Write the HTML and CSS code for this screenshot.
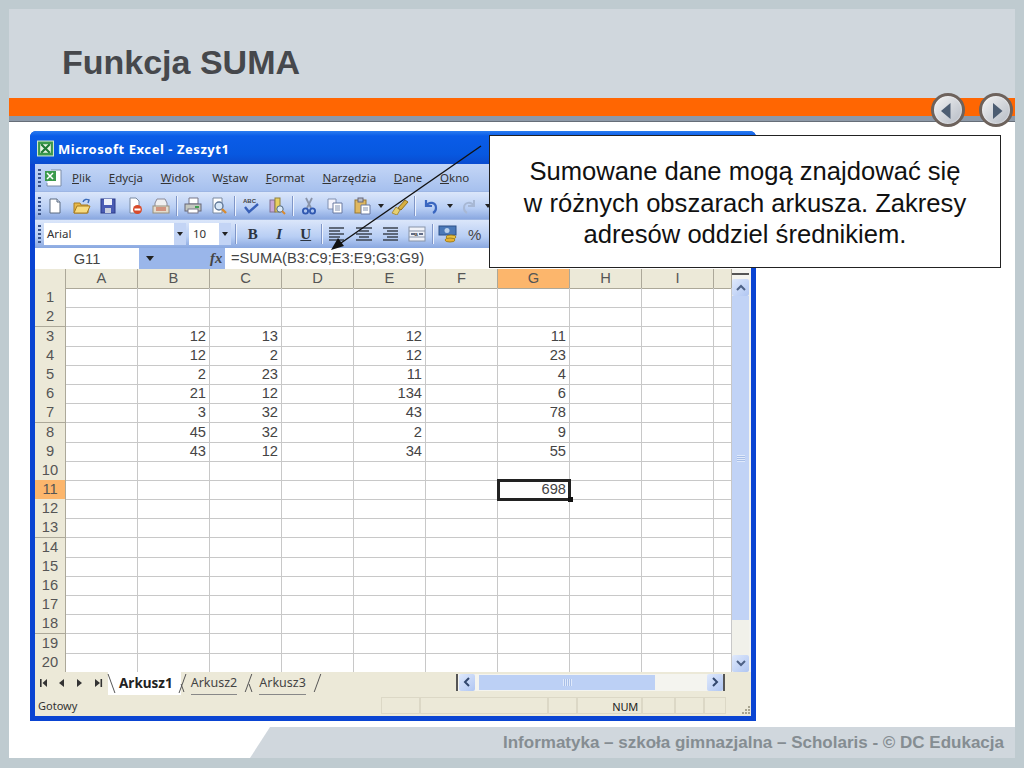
FILE: index.html
```html
<!DOCTYPE html>
<html lang="pl">
<head>
    <meta charset="UTF-8">
    <meta name="viewport" content="width=device-width, initial-scale=1.0">
    <title>Funkcja SUMA</title>
    <link rel="stylesheet" href="styles.css">
</head>
<body>
<div class="slide">

    <header class="slide-head">
        <h1>Funkcja SUMA</h1>
    </header>
    <div class="orange-bar"></div>
    <div class="grey-bar"></div>

    <!-- Previous / next buttons -->
    <div class="nav-buttons">
        <div class="nav-btn"><svg viewBox="0 0 34 34" width="34" height="34"><path d="M19.500 10v16L10 18z" fill="#4d5d72"/></svg></div>
        <div class="nav-btn"><svg viewBox="0 0 34 34" width="34" height="34"><path d="M14 10v16l9.500-8z" fill="#4d5d72"/></svg></div>
    </div>

    <main class="slide-main">
        <div class="excel">

            <div class="title-bar">
                <svg class="xl-logo" viewBox="0 0 16 16" width="17" height="17"><rect x="0.5" y="1" width="15" height="14" fill="#3c9a4c" stroke="#cfe8c8"/><rect x="3" y="4" width="10" height="8" fill="#e8f4e4"/><path d="M4 4l8 8M12 4l-8 8" stroke="#1f7a35" stroke-width="2"/></svg>
                <span>Microsoft Excel - Zeszyt1</span>
            </div>

            <div class="menu-bar">
                <span class="grip"></span>
                <svg class="menu-icon" viewBox="0 0 18 18" width="18" height="18"><path d="M7 1h10v16H3v-3" fill="#fff" stroke="#7b8ca8"/><rect x="1" y="2" width="11" height="10" fill="#3c9a4c"/><path d="M3 4l6 6M9 4l-6 6" stroke="#fff" stroke-width="1.5"/></svg>
                <nav class="menu-items">
                    <a><u>P</u>lik</a>
                    <a><u>E</u>dycja</a>
                    <a><u>W</u>idok</a>
                    <a>W<u>s</u>taw</a>
                    <a><u>F</u>ormat</a>
                    <a><u>N</u>arzędzia</a>
                    <a><u>D</u>ane</a>
                    <a><u>O</u>kno</a>
                </nav>
            </div>

            <div class="toolbar toolbar-std">
                <span class="grip"></span>
                <span class="tb"><svg viewBox="0 0 18 18" width="18" height="18"><path d="M4 2h7l3 3v11H4z" fill="#fff" stroke="#5a6a80"/><path d="M11 2v3h3" fill="#dfe6f2" stroke="#5a6a80"/></svg></span>
                <span class="tb"><svg viewBox="0 0 18 18" width="18" height="18"><path d="M1 6h6l1 2h7v8H1z" fill="#e8b848" stroke="#a87c20"/><path d="M1 16l3-7h13l-3 7z" fill="#f8dc80" stroke="#a87c20"/><path d="M10 5c1-3 4-3 6-2l-1 3" fill="none" stroke="#3a6ab8" stroke-width="1.4"/></svg></span>
                <span class="tb"><svg viewBox="0 0 18 18" width="18" height="18"><rect x="2" y="2" width="14" height="14" fill="#4a5cb4" stroke="#2c3a88"/><rect x="5" y="2" width="8" height="6" fill="#eef1fa"/><rect x="6" y="11" width="6" height="5" fill="#c8cede"/></svg></span>
                <span class="tb"><svg viewBox="0 0 18 18" width="18" height="18"><path d="M4 1h6l3 3v12H4z" fill="#fff" stroke="#7a8aa0"/><circle cx="11.5" cy="12.5" r="4.5" fill="#d84a2a"/><rect x="8.5" y="11.5" width="6" height="2" fill="#fff"/></svg></span>
                <span class="tb"><svg viewBox="0 0 18 18" width="18" height="18"><path d="M5 2h8l2 4v4H3V6z" fill="#f0f0f0" stroke="#8a8a98"/><rect x="1" y="9" width="16" height="7" fill="#e4dccc" stroke="#98907c"/><path d="M4 11h10M4 13h10" stroke="#c04a30"/></svg></span>
                <span class="tb-sep"></span>
                <span class="tb"><svg viewBox="0 0 18 18" width="18" height="18"><path d="M5 1h9v6H5z" fill="#fff" stroke="#778"/><rect x="1" y="7" width="16" height="7" fill="#c4c8c0" stroke="#667"/><rect x="4" y="12" width="10" height="4" fill="#fff" stroke="#778"/><rect x="11" y="9" width="4" height="2" fill="#40a050"/></svg></span>
                <span class="tb"><svg viewBox="0 0 18 18" width="18" height="18"><path d="M3 1h9v15H3z" fill="#fff" stroke="#7a8aa0"/><circle cx="9" cy="9" r="4" fill="#d8e8f8" stroke="#607898" stroke-width="1.4"/><path d="M12 12l4 4" stroke="#d88a30" stroke-width="2.4"/></svg></span>
                <span class="tb-sep"></span>
                <span class="tb"><svg viewBox="0 0 18 18" width="18" height="18"><text x="1" y="6" class="abc">ABC</text><path d="M3 10l4 5 9-8" fill="none" stroke="#3860b8" stroke-width="2.4"/></svg></span>
                <span class="tb"><svg viewBox="0 0 18 18" width="18" height="18"><rect x="2" y="3" width="5" height="12" fill="#c8a8d8" stroke="#807090"/><rect x="7" y="1" width="5" height="14" fill="#e8d060" stroke="#908040"/><circle cx="12" cy="12" r="3.2" fill="#d8e8f8" stroke="#506880"/><path d="M14 14l3 3" stroke="#d88a30" stroke-width="2"/></svg></span>
                <span class="tb-sep"></span>
                <span class="tb"><svg viewBox="0 0 18 18" width="18" height="18"><path d="M6 1l5 10M12 1l-5 10" stroke="#8a94a8" stroke-width="1.8"/><circle cx="5.500" cy="14" r="2.600" fill="none" stroke="#3058b0" stroke-width="1.8"/><circle cx="12.500" cy="14" r="2.600" fill="none" stroke="#3058b0" stroke-width="1.8"/></svg></span>
                <span class="tb"><svg viewBox="0 0 18 18" width="18" height="18"><path d="M2 2h8v10H2z" fill="#f4f4fc" stroke="#8090b0"/><path d="M7 6h9v10H7z" fill="#fff" stroke="#6878a0"/><path d="M9 9h5M9 11h5M9 13h5" stroke="#8090b0"/></svg></span>
                <span class="tb tb-short"><svg viewBox="0 0 18 18" width="18" height="18"><rect x="2" y="3" width="11" height="13" fill="#e0b860" stroke="#987830"/><rect x="5" y="1" width="5" height="4" fill="#b8bcc8" stroke="#667"/><path d="M8 8h9v9H8z" fill="#fff" stroke="#6878a0"/><path d="M10 11h5M10 13h5" stroke="#8090b0"/></svg></span>
                <span class="tb-drop"></span>
                <span class="tb tb-short"><svg viewBox="0 0 18 18" width="18" height="18"><path d="M1 16l4-6 4 3-3 5z" fill="#e8d070" stroke="#a89040"/><path d="M7 11l7-8 3 2-7 8z" fill="#d8b040" stroke="#907020"/></svg></span>
                <span class="tb-sep"></span>
                <span class="tb tb-short"><svg viewBox="0 0 18 18" width="18" height="18"><path d="M4 3v6h6" fill="none" stroke="#3a66c0" stroke-width="2.2"/><path d="M4 9c3-5 10-4 10 2 0 2-1 4-3 5" fill="none" stroke="#3a66c0" stroke-width="2.2"/></svg></span>
                <span class="tb-drop"></span>
                <span class="tb tb-short"><svg viewBox="0 0 18 18" width="18" height="18"><path d="M14 3v6H8" fill="none" stroke="#a8b8d4" stroke-width="2"/><path d="M14 9c-3-5-10-4-10 2 0 2 1 4 3 5" fill="none" stroke="#a8b8d4" stroke-width="2"/></svg></span>
                <span class="tb-drop"></span>
            </div>

            <div class="toolbar toolbar-format">
                <span class="grip"></span>
                <span class="combo combo-font">Arial</span>
                <span class="combo-btn"></span>
                <span class="combo combo-size">10</span>
                <span class="combo-btn"></span>
                <span class="tb-sep"></span>
                <span class="tb tb-text bold">B</span>
                <span class="tb tb-text italic">I</span>
                <span class="tb tb-text under">U</span>
                <span class="tb-sep"></span>
                <span class="tb"><svg viewBox="0 0 18 18" width="18" height="18"><path d="M1 3h15M1 6h11M1 9h15M1 12h11M1 15h15" stroke="#3c4450" stroke-width="1.5"/></svg></span>
                <span class="tb"><svg viewBox="0 0 18 18" width="18" height="18"><path d="M1 3h16M4 6h10M1 9h16M4 12h10M1 15h16" stroke="#3c4450" stroke-width="1.5"/></svg></span>
                <span class="tb"><svg viewBox="0 0 18 18" width="18" height="18"><path d="M2 3h15M6 6h11M2 9h15M6 12h11M2 15h15" stroke="#3c4450" stroke-width="1.5"/></svg></span>
                <span class="tb"><svg viewBox="0 0 18 18" width="18" height="18"><rect x="1" y="2" width="16" height="14" fill="#f0f2f8" stroke="#8894a8"/><path d="M1 6h16M1 12h16" stroke="#8894a8"/><path d="M3 9h4M11 9h4" stroke="#304060" stroke-width="1.4"/><text x="6.5" y="11" class="abc">a</text></svg></span>
                <span class="tb-sep"></span>
                <span class="tb"><svg viewBox="0 0 20 18" width="20" height="18"><rect x="1" y="1" width="17" height="9" fill="#4a78b8" stroke="#2c5088"/><circle cx="9" cy="5.5" r="2.5" fill="#b8d0ec"/><ellipse cx="13" cy="12" rx="5" ry="2" fill="#e8c040" stroke="#a08020"/><ellipse cx="12" cy="15" rx="5" ry="2" fill="#e8b030" stroke="#a08020"/></svg></span>
                <span class="tb tb-text percent">%</span>
            </div>

            <div class="formula-bar">
                <span class="name-box">G11</span>
                <span class="name-drop"></span>
                <span class="fx">fx</span>
                <span class="formula">=SUMA(B3:C9;E3:E9;G3:G9)</span>
            </div>

            <!-- Sheet: grid plus vertical scrollbar -->
            <div class="sheet-area">
                <div class="sheet">
                    <div class="row row-head"><span></span><span>A</span><span>B</span><span>C</span><span>D</span><span>E</span><span>F</span><span class="active">G</span><span>H</span><span>I</span><span></span></div>
                    <div class="row"><span>1</span><i></i><i></i><i></i><i></i><i></i><i></i><i></i><i></i><i></i><i></i></div>
                    <div class="row"><span>2</span><i></i><i></i><i></i><i></i><i></i><i></i><i></i><i></i><i></i><i></i></div>
                    <div class="row"><span>3</span><i></i><i>12</i><i>13</i><i></i><i>12</i><i></i><i>11</i><i></i><i></i><i></i></div>
                    <div class="row"><span>4</span><i></i><i>12</i><i>2</i><i></i><i>12</i><i></i><i>23</i><i></i><i></i><i></i></div>
                    <div class="row"><span>5</span><i></i><i>2</i><i>23</i><i></i><i>11</i><i></i><i>4</i><i></i><i></i><i></i></div>
                    <div class="row"><span>6</span><i></i><i>21</i><i>12</i><i></i><i>134</i><i></i><i>6</i><i></i><i></i><i></i></div>
                    <div class="row"><span>7</span><i></i><i>3</i><i>32</i><i></i><i>43</i><i></i><i>78</i><i></i><i></i><i></i></div>
                    <div class="row"><span>8</span><i></i><i>45</i><i>32</i><i></i><i>2</i><i></i><i>9</i><i></i><i></i><i></i></div>
                    <div class="row"><span>9</span><i></i><i>43</i><i>12</i><i></i><i>34</i><i></i><i>55</i><i></i><i></i><i></i></div>
                    <div class="row"><span>10</span><i></i><i></i><i></i><i></i><i></i><i></i><i></i><i></i><i></i><i></i></div>
                    <div class="row"><span class="active">11</span><i></i><i></i><i></i><i></i><i></i><i></i><i class="selected">698</i><i></i><i></i><i></i></div>
                    <div class="row"><span>12</span><i></i><i></i><i></i><i></i><i></i><i></i><i></i><i></i><i></i><i></i></div>
                    <div class="row"><span>13</span><i></i><i></i><i></i><i></i><i></i><i></i><i></i><i></i><i></i><i></i></div>
                    <div class="row"><span>14</span><i></i><i></i><i></i><i></i><i></i><i></i><i></i><i></i><i></i><i></i></div>
                    <div class="row"><span>15</span><i></i><i></i><i></i><i></i><i></i><i></i><i></i><i></i><i></i><i></i></div>
                    <div class="row"><span>16</span><i></i><i></i><i></i><i></i><i></i><i></i><i></i><i></i><i></i><i></i></div>
                    <div class="row"><span>17</span><i></i><i></i><i></i><i></i><i></i><i></i><i></i><i></i><i></i><i></i></div>
                    <div class="row"><span>18</span><i></i><i></i><i></i><i></i><i></i><i></i><i></i><i></i><i></i><i></i></div>
                    <div class="row"><span>19</span><i></i><i></i><i></i><i></i><i></i><i></i><i></i><i></i><i></i><i></i></div>
                    <div class="row"><span>20</span><i></i><i></i><i></i><i></i><i></i><i></i><i></i><i></i><i></i><i></i></div>
                </div>
                <div class="vscroll">
                    <div class="vscroll-split"></div>
                    <div class="sb-btn"><svg viewBox="0 0 14 14" width="14" height="14"><path d="M3 9l4-4 4 4" fill="none" stroke="#4d6185" stroke-width="2"/></svg></div>
                    <div class="vthumb"><span class="vthumb-grip"></span></div>
                    <div class="vtrack"></div>
                    <div class="sb-btn"><svg viewBox="0 0 14 14" width="14" height="14"><path d="M3 5l4 4 4-4" fill="none" stroke="#4d6185" stroke-width="2"/></svg></div>
                </div>
            </div>

            <div class="tabs-bar">
                <div class="tab-nav">
                    <svg viewBox="0 0 66 12" width="66" height="12"><path d="M2 2h1.600v8H2zM9 2v8L4.500 6zM26 2v8l-5-4zM39 2v8l5-4zM57 2v8l5-4zM62.500 2h1.600v8h-1.600z" fill="#333"/></svg>
                </div>
                <div class="tabs">
                    <span class="tab tab-active">Arkusz1</span>
                    <span class="tab">Arkusz2</span>
                    <span class="tab">Arkusz3</span>
                </div>
                <div class="hscroll">
                    <div class="sb-btn sb-btn-h"><svg viewBox="0 0 14 14" width="14" height="14"><path d="M9 3L5 7l4 4" fill="none" stroke="#33486e" stroke-width="2"/></svg></div>
                    <div class="hthumb"><span class="hthumb-grip"></span></div>
                    <div class="htrack"></div>
                    <div class="sb-btn sb-btn-h"><svg viewBox="0 0 14 14" width="14" height="14"><path d="M5 3l4 4-4 4" fill="none" stroke="#33486e" stroke-width="2"/></svg></div>
                </div>
            </div>

            <div class="status-bar">
                <span class="status-text">Gotowy</span>
                <span class="pane pane-a"></span>
                <span class="pane pane-b"></span>
                <span class="pane pane-c"></span>
                <span class="pane pane-num">NUM</span>
                <span class="pane pane-d"></span>
                <span class="pane pane-e"></span>
                <span class="pane pane-f"></span>
                <svg class="resize-grip" viewBox="0 0 12 12" width="12" height="12"><path d="M9 2h2v2H9zM6 5h2v2H6zM9 5h2v2H9zM3 8h2v2H3zM6 8h2v2H6zM9 8h2v2H9z" fill="#a8a490"/></svg>
            </div>
        </div>
    </main>

    <!-- Callout and its arrow lie over the Excel window -->
    <svg class="arrow" viewBox="0 0 160 110" width="160" height="110">
        <path d="M151 1L11 98" stroke="#111" stroke-width="1.4"/>
        <path d="M1 105l7-12 6 8z" fill="#111"/>
    </svg>
    <div class="callout">
        Sumowane dane mogą znajdować się<br>
        w różnych obszarach arkusza. Zakresy<br>
        adresów oddziel średnikiem.
    </div>

    <footer class="slide-foot">
        <div class="foot-shape">Informatyka – szkoła gimnazjalna – Scholaris - © DC Edukacja</div>
    </footer>
</div>
</body>
</html>
```

FILE: styles.css
```css
body {
    margin: 0;
    background-color: #bfcbd0;
    font-family: "Liberation Sans", Arial, sans-serif;
}

.slide {
    position: relative;
    display: flex;
    flex-direction: column;
    width: 1006px;
    height: 749px;
    margin: 9px 9px 10px;
    background-color: #fff;
    overflow: hidden;
}

.slide-head {
    height: 89px;
    background-color: #d0d7dd;
    display: flex;
    align-items: center;
    padding-left: 53px;
}

.slide-head h1 {
    margin: 17px 0 0;
    font-size: 34px;
    font-weight: bold;
    color: #46484c;
}

.orange-bar {
    height: 18px;
    background-color: #ff6602;
}

.grey-bar {
    height: 6px;
    background-color: #8d99a8;
    border-bottom: 1px solid #666e78;
    box-sizing: border-box;
}

.nav-buttons {
    position: absolute;
    top: 84px;
    right: 2px;
    display: flex;
    gap: 14px;
}

.nav-btn {
    width: 34px;
    height: 34px;
    border-radius: 50%;
    box-sizing: border-box;
    border: 3px solid #6d625c;
    background: linear-gradient(135deg, #f4f4f4, #b4bac4);
    box-shadow: inset 0 0 2px #fff;
    display: flex;
    align-items: center;
    justify-content: center;
}

.nav-btn svg {
    flex: none;
}

.slide-main {
    flex: 1;
    padding: 9px 0 0 21px;
}

/* Excel window */
.excel {
    width: 726px;
    height: 590px;
    box-sizing: border-box;
    padding: 0 5px 5px;
    background: #0a44d2;
    border-radius: 6px 6px 0 0;
    display: flex;
    flex-direction: column;
    font-family: "Noto Sans", sans-serif;
    font-size: 11.5px;
    color: #333;
}

.title-bar {
    height: 33px;
    flex: none;
    margin: 0 -5px;
    padding: 2px 0 0 7px;
    box-sizing: border-box;
    display: flex;
    align-items: center;
    gap: 4px;
    border-radius: 6px 6px 0 0;
    background: linear-gradient(#2a7cf0, #0a5ce8 15%, #0758e0 70%, #0a4cd0);
    color: #fff;
    font-size: 13px;
    font-weight: bold;
    letter-spacing: 0.55px;
}

.menu-bar {
    height: 27px;
    flex: none;
    display: flex;
    align-items: center;
    background: linear-gradient(#c4d6f6, #a6c0ee);
}

.grip {
    width: 3px;
    height: 18px;
    margin: 0 3px;
    flex: none;
    background: repeating-linear-gradient(#3c5488 0 2px, transparent 2px 4px);
}

.toolbar-std .grip {
    margin-right: 1px;
}

.menu-icon {
    flex: none;
}

.menu-items {
    display: flex;
    gap: 17.7px;
    margin-left: 10px;
}

.toolbar {
    height: 28px;
    flex: none;
    display: flex;
    align-items: center;
    background: linear-gradient(#dbe6fa, #b8cef4 60%, #8aa8e0);
    border-top: 1px solid #9db6e4;
    box-sizing: border-box;
}

.toolbar-format {
    height: 29px;
}

.tb {
    width: 26.5px;
    flex: none;
    display: flex;
    justify-content: center;
}

.tb-short {
    width: 26px;
}

.tb-sep {
    width: 1px;
    height: 20px;
    margin: 0 1.5px;
    flex: none;
    background-color: #7f96c8;
    border-right: 1px solid #eef3fd;
}

.tb-drop {
    width: 12px;
    flex: none;
    position: relative;
    height: 4px;
}

.tb-drop::after,
.combo-btn::after {
    content: "";
    position: absolute;
    left: 50%;
    top: 50%;
    margin: -2px 0 0 -3px;
    border: 3px solid transparent;
    border-top: 4px solid #222;
    border-bottom: 0;
}

.abc {
    font-family: "Liberation Sans", sans-serif;
    font-size: 6px;
    font-weight: bold;
    fill: #444;
}

.combo {
    height: 22px;
    line-height: 22px;
    background-color: #fff;
    flex: none;
    box-sizing: border-box;
    font-size: 11.5px;
}

.combo-font {
    width: 130px;
    padding-left: 3px;
}

.combo-size {
    width: 30px;
    margin-left: 3px;
    padding-left: 4px;
}

.combo-btn {
    position: relative;
    width: 12px;
    height: 22px;
    flex: none;
    background-color: #c3d4f5;
}

.combo-btn + .tb-sep {
    margin-left: 4px;
    margin-right: 2.5px;
}

.tb-text {
    font-family: "Liberation Serif", serif;
    font-size: 15px;
    font-weight: bold;
    color: #2c3440;
}

.italic {
    font-style: italic;
}

.under {
    text-decoration: underline;
}

.percent {
    font-family: "Liberation Sans", sans-serif;
    font-weight: normal;
    color: #444;
}

.formula-bar {
    height: 21px;
    flex: none;
    display: flex;
    align-items: center;
    background-color: #9ab6ea;
    font-family: "Liberation Sans", sans-serif;
    font-size: 14.7px;
    color: #444;
}

.name-box {
    width: 104px;
    height: 100%;
    background-color: #fff;
    display: flex;
    align-items: center;
    justify-content: center;
    flex: none;
}

.name-drop {
    width: 0;
    margin-left: 7px;
    border: 4px solid transparent;
    border-top: 5px solid #222;
    border-bottom: 0;
}

.fx {
    width: 15px;
    margin-left: 56px;
    flex: none;
    font-family: "Liberation Serif", serif;
    font-style: italic;
    font-weight: bold;
}

.formula {
    flex: 1;
    height: 100%;
    padding-left: 6px;
    background-color: #fff;
    line-height: 20px;
}

/* Sheet */
.sheet-area {
    flex: none;
    display: flex;
    background-color: #fff;
}

.sheet {
    width: 697px;
    flex: none;
}

.row {
    display: grid;
    grid-template-columns: 31px repeat(9, 72px) 18px;
    height: 19.2px;
    font-family: "Liberation Sans", sans-serif;
    font-size: 14.7px;
    line-height: 19px;
    color: #444;
}

.row span {
    background-color: #ece9d8;
    border-right: 1px solid #aca899;
    border-bottom: 1px solid #aca899;
    box-sizing: border-box;
    text-align: center;
    color: #555;
}

.row span.active {
    background-color: #fcb66c;
}

.row i {
    font-style: normal;
    text-align: right;
    padding-right: 3px;
    box-sizing: border-box;
    border-right: 1px solid #c8c8c8;
    border-bottom: 1px solid #c8c8c8;
}

.row i.selected {
    position: relative;
    outline: 3px solid #222;
    outline-offset: -2px;
    z-index: 1;
}

.row i.selected::after {
    content: "";
    position: absolute;
    right: -4px;
    bottom: -3px;
    width: 5px;
    height: 5px;
    background-color: #111;
}

.vscroll {
    width: 19px;
    flex: none;
    padding-right: 2px;
    box-sizing: border-box;
    display: flex;
    flex-direction: column;
    background-color: #f4f4ef;
}

.vscroll-split {
    height: 10px;
    flex: none;
    border-top: 2px solid #555;
    margin-top: 4px;
    box-sizing: border-box;
    margin-bottom: -4px;
}

.sb-btn {
    width: 17px;
    height: 17px;
    flex: none;
    display: flex;
    align-items: center;
    justify-content: center;
    border-radius: 2px;
    background: linear-gradient(135deg, #dfe9fc, #b0c6f2);
}

.sb-btn-h {
    width: 16px;
}

.vthumb {
    height: 324px;
    flex: none;
    background-color: #c1d3f6;
    display: flex;
    align-items: center;
    justify-content: center;
}

.vthumb-grip {
    width: 8px;
    height: 7px;
    background: repeating-linear-gradient(#dfe9fb 0 1px, #a8bfe8 1px 2px);
}

.vtrack {
    flex: 1;
    background-color: #f1f1ea;
}

/* Tabs and status bar */
.tabs-bar {
    height: 23px;
    flex: none;
    display: flex;
    align-items: center;
    background-color: #ece9d8;
    position: relative;
}

.tab-nav {
    width: 73px;
    flex: none;
    padding-left: 3px;
    box-sizing: border-box;
    display: flex;
}

.tabs {
    display: flex;
    height: 100%;
    font-size: 12.5px;
}

.tab {
    position: relative;
    display: flex;
    align-items: center;
    margin-right: 22px;
    color: #444;
    border-bottom: 1px solid #888;
    box-sizing: border-box;
}

.tab-active {
    font-size: 13.5px;
    font-weight: bold;
    color: #222;
    background-color: #fff;
    padding: 0 8px 0 11px;
    margin-right: 10px;
    border-bottom: 0;
}

.tab::before,
.tab::after {
    content: "";
    position: absolute;
    bottom: 2px;
    width: 1px;
    background-color: #555;
}

.tab::before {
    left: -9px;
    height: 8px;
    transform: skewX(20deg);
}

.tab::after {
    top: 2px;
    right: -12px;
    transform: skewX(-20deg);
}

.tab-active::before {
    left: 3px;
    top: 2px;
    height: auto;
}

.tab-active::after {
    right: -2px;
}

.hscroll {
    position: absolute;
    left: 421px;
    right: 26px;
    top: 2px;
    height: 17px;
    display: flex;
    align-items: center;
    gap: 4px;
    padding-left: 1px;
    border-left: 2px solid #555;
    border-right: 2px solid #555;
    background-color: #f4f4ef;
}

.hthumb {
    width: 176px;
    height: 15px;
    background-color: #bcd0f5;
    display: flex;
    justify-content: center;
    align-items: center;
}

.hthumb-grip {
    width: 9px;
    height: 7px;
    background: repeating-linear-gradient(90deg, #dfe9fb 0 1px, #a8bfe8 1px 2px);
}

.htrack {
    flex: 1;
}

.status-bar {
    flex: 1;
    display: flex;
    align-items: center;
    background-color: #ece9d8;
    position: relative;
    font-size: 11px;
}

.status-text {
    width: 346px;
    padding-left: 3px;
    box-sizing: border-box;
    flex: none;
}

.pane {
    height: 17px;
    line-height: 17px;
    flex: none;
    box-sizing: border-box;
    border: 1px solid #dcd8c6;
    text-align: right;
    padding-right: 3px;
    letter-spacing: -0.2px;
    color: #222;
}

.pane-a { width: 39px; }
.pane-b { width: 128px; }
.pane-c { width: 29px; }
.pane-num { width: 65px; }
.pane-d { width: 33px; }
.pane-e { width: 29px; }
.pane-f { width: 22px; }

.resize-grip {
    position: absolute;
    right: 0;
    bottom: 0;
}

/* Overlays */
.arrow {
    position: absolute;
    left: 321px;
    top: 136px;
}

.callout {
    position: absolute;
    left: 480px;
    top: 126px;
    width: 512px;
    height: 133px;
    box-sizing: border-box;
    border: 1.5px solid #222;
    background-color: #fff;
    padding-top: 20px;
    text-align: center;
    font-size: 25.6px;
    line-height: 31.5px;
    color: #111;
}

.slide-foot {
    height: 31px;
    flex: none;
    display: flex;
    justify-content: flex-end;
}

.foot-shape {
    width: 765px;
    box-sizing: border-box;
    background-color: #d0d7dd;
    clip-path: polygon(20px 0, 100% 0, 100% 100%, 0 100%);
    text-align: right;
    padding-right: 11px;
    line-height: 31px;
    font-size: 17px;
    font-weight: bold;
    color: #858d92;
}
```
